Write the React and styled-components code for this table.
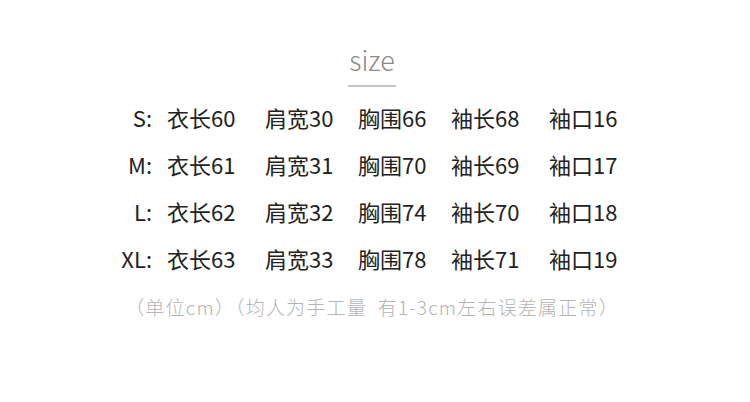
import styled, { createGlobalStyle } from "styled-components";

const GlobalStyle = createGlobalStyle`
	html, body {
		margin: 0;
		padding: 0;
		background: #fff;
	}
	body {
		font-family: "Noto Sans CJK SC", "Noto Sans", sans-serif;
	}
`;

const sizes = [
	{ label: "S:", values: ["衣长60", "肩宽30", "胸围66", "袖长68", "袖口16"] },
	{ label: "M:", values: ["衣长61", "肩宽31", "胸围70", "袖长69", "袖口17"] },
	{ label: "L:", values: ["衣长62", "肩宽32", "胸围74", "袖长70", "袖口18"] },
	{ label: "XL:", values: ["衣长63", "肩宽33", "胸围78", "袖长71", "袖口19"] },
];

export default function App() {
	return (
		<>
			<GlobalStyle />
			<Page>
				<Title>size</Title>
				<Rule />
				<Table>
					{sizes.map(row => (
						<Row key={row.label}>
							<Label>{row.label}</Label>
							{row.values.map(v => (
								<Cell key={v}>{v}</Cell>
							))}
						</Row>
					))}
				</Table>
				<Note>（单位cm）（均人为手工量  有1-3cm左右误差属正常）</Note>
			</Page>
		</>
	);
}

const Page = styled.div`
	width: 750px;
	height: 402px;
	display: flex;
	flex-direction: column;
	align-items: center;
	padding-top: 42px;
	box-sizing: border-box;
`;

const Title = styled.div`
	font-size: 27px;
	font-weight: 300;
	color: #8a8a8a;
	line-height: 36px;
	margin-right: 6px;
`;

const Rule = styled.div`
	width: 48px;
	height: 2px;
	background: #c4c4c4;
	margin-top: 7px;
	margin-right: 6px;
`;

const Table = styled.div`
	align-self: flex-start;
	margin-top: 6px;
	display: flex;
	flex-direction: column;
`;

const Row = styled.div`
	display: grid;
	grid-template-columns: 152px 15px 98px 93px 93px 98px auto;
	height: 47px;
	align-items: center;
	font-size: 22px;
	font-weight: 400;
	color: #222;
`;

const Label = styled.span`
	text-align: right;
	grid-column: 1;
`;

const Cell = styled.span`
	white-space: nowrap;
	&:nth-child(2) {
		grid-column: 3;
	}
`;

const Note = styled.div`
	margin-top: 12px;
	margin-right: 6px;
	font-size: 19px;
	font-weight: 300;
	letter-spacing: 1.2px;
	color: #b4b4b4;
	white-space: pre;
`;
